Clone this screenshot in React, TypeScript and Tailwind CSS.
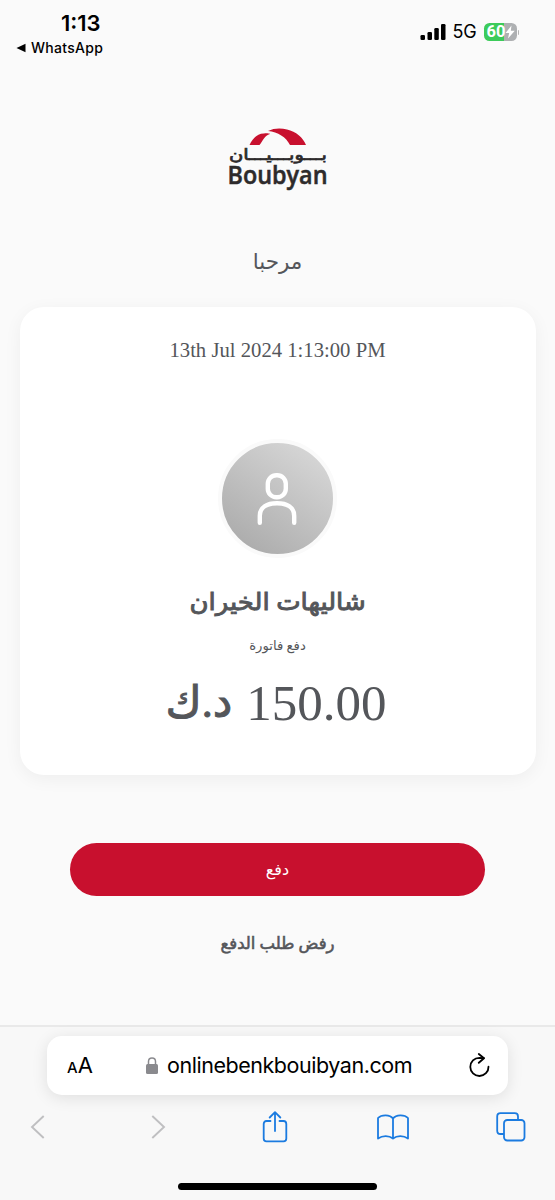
import React from 'react';

const Logo: React.FC = () => (
  <svg className="overflow-visible" width="104" height="72" viewBox="0 0 104 72" aria-label="Boubyan">
    <path d="M23.5 19C27 11.7 32 7.2 38 7.4C41 7.2 43 7.4 44 7.9C38.5 9.5 37 14.7 33.5 19Z" fill="#c8102e" />
    <path d="M42 5C48 2 55 1.8 61 3.6C70 5.7 77 11.7 80 19H64C60 11 52 6 42 5Z" fill="#c8102e" />
    <text x="52" y="34" textAnchor="middle" direction="rtl" textLength="98" lengthAdjust="spacingAndGlyphs" fontFamily="DejaVu Sans, sans-serif" fontSize="15.5" fill="#2d2a2b" stroke="#2d2a2b" strokeWidth="0.7">بـــوبـــيـــان</text>
    <text x="1.5" y="57.5" textLength="100" lengthAdjust="spacingAndGlyphs" fontFamily="Open Sans, sans-serif" fontWeight="600" fontSize="24.5" fill="#2d2a2b" stroke="#2d2a2b" strokeWidth="0.5">Boubyan</text>
  </svg>
);

const StatusBar: React.FC = () => (
  <div className="flex h-[70px] justify-between text-black">
    <div className="w-[120px] pt-[11px] pl-4">
      <p className="pl-[45px] text-[22px] font-semibold leading-6">1:13</p>
      <div className="mt-[4px] flex items-center gap-[5px]">
        <svg width="10" height="10" viewBox="0 0 10 10">
          <path d="M0.5 5L9.5 0.8V9.2Z" />
        </svg>
        <span className="text-[14px] font-medium leading-[18px] tracking-[0.3px]">WhatsApp</span>
      </div>
    </div>
    <div className="flex h-[20px] items-center pr-[36px] mt-[22px]">
      <svg width="27" height="18" viewBox="0 0 27 18">
        <rect x="0.5" y="12" width="4.5" height="5" rx="1.3" />
        <rect x="7.5" y="9" width="4.5" height="8" rx="1.3" />
        <rect x="14.3" y="5" width="4.5" height="12" rx="1.3" />
        <rect x="21" y="1" width="4.5" height="16" rx="1.3" />
      </svg>
      <span className="ml-[6px] text-[18px] leading-5 tracking-[-0.2px]">5G</span>
      <div className="ml-[7px] flex h-[18px] w-[33px] items-center rounded-[5.5px] bg-[linear-gradient(90deg,#3ccb5a_0_62%,#aeb0b2_62%)] pl-[3px] text-white">
        <span className="font-[Roboto] text-[16.5px] font-bold leading-[18px]">60</span>
        <svg width="10" height="14" viewBox="0 0 10 14" fill="white">
          <path d="M6.5 0.5L0.5 8H4.2L3 13.5L9.8 5.8H5.8Z" />
        </svg>
      </div>
      <div className="ml-[1px] h-[5px] w-[1.5px] rounded-r bg-[#b5b5b5]" />
    </div>
  </div>
);

const Avatar: React.FC = () => (
  <div className="mt-[77px] flex size-[119px] items-center justify-center rounded-full border-4 border-[#fafafa] bg-[linear-gradient(215deg,#dcdcdc,#a6a6a6)]">
    <svg width="42" height="56" viewBox="0 0 42 56" fill="none" stroke="white" strokeWidth="4.4" strokeLinecap="round">
      <rect x="10.8" y="4.3" width="18" height="22" rx="8.5" />
      <path d="M2.8 51.7V45C2.8 36 10 32.2 20 32.2S37.2 36 37.2 45V51.7" />
    </svg>
  </div>
);

const BrowserBar: React.FC = () => (
  <div className="h-[175px] border-t-2 border-[#e9e9e9] bg-[#f8f8f8]">
    <div className="mx-[47px] mt-[9px] flex h-[59px] items-center rounded-[15px] bg-white text-black shadow-[0_3px_16px_rgba(0,0,0,0.10)]">
      <div className="flex w-[99px] items-baseline pb-px pl-[20px] leading-none">
        <span className="text-[15px] font-medium">A</span>
        <span className="text-[22px]">A</span>
      </div>
      <svg width="12" height="18" viewBox="0 0 12 18">
        <rect y="7" width="12" height="10" rx="1.5" fill="#8a8a8e" />
        <path d="M2.5 7.5V4.5C2.5 -0.2 9.5 -0.2 9.5 4.5V7.5" fill="none" stroke="#8a8a8e" strokeWidth="1.5" />
      </svg>
      <span className="ml-[9px] w-[246px] whitespace-nowrap text-[21.5px] tracking-[-0.46px]">onlinebenkbouibyan.com</span>
      <svg className="ml-[56px]" width="22" height="26" viewBox="0 0 22 26" fill="none" stroke="black" strokeWidth="1.8" strokeLinecap="round" strokeLinejoin="round">
        <path d="M19.5 13.7A9.1 9.1 0 1 1 10.4 4.8L14.8 5.2" />
        <path d="M9.8 1L15 5.3L9.8 9.8" />
      </svg>
    </div>
    <div className="mt-[13px] flex h-[38px] items-center pl-[30px]">
      <svg className="shrink-0" width="15" height="24" viewBox="0 0 15 24" fill="none" stroke="#bfbfc1" strokeWidth="1.9">
        <path d="M13.7 1L2 12L13.7 23" />
      </svg>
      <svg className="ml-[106px] shrink-0" width="15" height="24" viewBox="0 0 15 24" fill="none" stroke="#bfbfc1" strokeWidth="1.9">
        <path d="M1.3 1L13 12L1.3 23" />
      </svg>
      <svg className="ml-[96px] shrink-0" width="26" height="32" viewBox="0 0 26 32" fill="none" stroke="#1b7be0" strokeWidth="1.8" strokeLinecap="round" strokeLinejoin="round">
        <path d="M8.5 10H4.5Q1.7 10 1.7 13V27.5Q1.7 30.4 4.5 30.4H21.5Q24.3 30.4 24.3 27.5V13Q24.3 10 21.5 10H17.5" />
        <path d="M13 20V1.2M7.7 6.5L13 1.2L18.3 6.5" />
      </svg>
      <svg className="ml-[89px] shrink-0" width="32" height="26" viewBox="0 0 32 26" fill="none" stroke="#1b7be0" strokeWidth="1.8" strokeLinejoin="round">
        <path d="M16 4.5C13 0.3 4.5 0.3 1 4V24.5C5.5 21.3 12 21.3 16 24.5C20 21.3 26.5 21.3 31 24.5V4C27.5 0.3 19 0.3 16 4.5V24.5" />
      </svg>
      <svg className="ml-[87px] shrink-0" width="30" height="30" viewBox="0 0 30 30" fill="none" stroke="#1b7be0" strokeWidth="1.8">
        <path d="M8 22H4.5Q1.2 22 1.2 18.7V4.5Q1.2 1.2 4.5 1.2H18.7Q22 1.2 22 4.5V8" />
        <rect x="8" y="8" width="20.5" height="20.5" rx="3.3" />
      </svg>
    </div>
    <div className="mx-auto mt-[37px] h-[7px] w-[199px] rounded-full bg-black" />
  </div>
);

const App: React.FC = () => {
  return (
    <div className="flex h-[1200px] w-[555px] flex-col overflow-hidden bg-[#fafafa] font-[Inter,sans-serif]">
      <StatusBar />
      <div className="flex h-[955px] flex-col items-center pt-[56px] font-['Liberation_Serif','DejaVu_Sans',serif] text-[#54565a]">
        <Logo />
        <h1 dir="rtl" className="mt-[49px] flex h-[30px] items-center text-[21.5px]">مرحبا</h1>
        {/* Payment card */}
        <div className="mt-[30px] flex h-[468px] w-[516px] shrink-0 flex-col items-center rounded-[24px] bg-white pt-[31px] shadow-[0_4px_18px_rgba(0,0,0,0.05)]">
          <p className="text-[20.7px] leading-6">13th Jul 2024 1:13:00 PM</p>
          <Avatar />
          <h2 dir="rtl" className="mt-[26px] flex h-[36px] scale-x-[1.08] items-center text-[24px] [-webkit-text-stroke:0.9px_#54565a]">شاليهات الخيران</h2>
          <p dir="rtl" className="mt-[14px] flex h-[24px] items-center text-[13.2px]">دفع فاتورة</p>
          <p className="mt-[13px] flex h-[64px] items-center gap-[14px] pr-[3px] text-[51px]">
            <span dir="rtl" className="text-[44px] [-webkit-text-stroke:1px_#54565a]">د.ك</span>
            <span>150.00</span>
          </p>
        </div>
        <button dir="rtl" className="mt-[68px] h-[53px] w-[415px] shrink-0 rounded-full bg-[#c8102e] pt-px text-[16px] text-white">دفع</button>
        <button dir="rtl" className="mt-[32px] h-[32px] text-[16.5px] [-webkit-text-stroke:0.6px_#54565a]">رفض طلب الدفع</button>
      </div>
      <BrowserBar />
    </div>
  );
};

export default App;
